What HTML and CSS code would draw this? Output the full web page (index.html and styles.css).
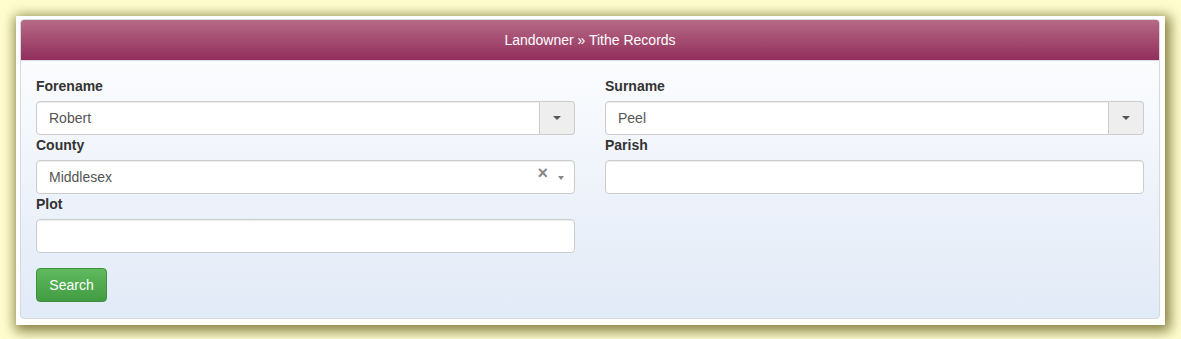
FILE: index.html
```html
<!DOCTYPE html>
<html>
<head>
<meta charset="utf-8">
<link rel="stylesheet" href="styles.css">
</head>
<body>
<div class="frame">
  <div class="panel">
    <div class="panel-heading">Landowner &raquo; Tithe Records</div>
    <div class="panel-body">
      <div class="grid">
        <div class="field">
          <label class="lbl">Forename</label>
          <div class="input-group">
            <div class="control">Robert</div>
            <div class="addon"><span class="caret"></span></div>
          </div>
        </div>
        <div class="field">
          <label class="lbl">Surname</label>
          <div class="input-group">
            <div class="control">Peel</div>
            <div class="addon"><span class="caret"></span></div>
          </div>
        </div>
        <div class="field">
          <label class="lbl">County</label>
          <div class="control combo">
            <span class="combo-text">Middlesex</span>
            <span class="clear">&times;</span>
            <span class="caret small"></span>
          </div>
        </div>
        <div class="field">
          <label class="lbl">Parish</label>
          <div class="control"></div>
        </div>
        <div class="field">
          <label class="lbl">Plot</label>
          <div class="control"></div>
        </div>
      </div>
      <button class="btn-search">Search</button>
    </div>
  </div>
</div>
</body>
</html>
```

FILE: styles.css
```css
html, body {
  margin: 0;
  padding: 0;
}
html {
  background: #fffdcf;
}
body {
  padding: 16px 16px 14px 16px;
  font-family: "Liberation Sans", Arial, sans-serif;
  font-size: 14px;
  line-height: 20px;
  color: #333;
}
.frame {
  background: #fff;
  padding: 3px 5px 6px 4px;
  box-shadow: 2px 3px 12px 3px rgba(85, 82, 15, 0.75);
}
.panel {
  border: 1px solid #d6d9e0;
  border-radius: 4px;
  overflow: hidden;
  background: linear-gradient(to bottom, #ffffff 0%, #e1eaf7 100%);
}
.panel-heading {
  height: 40px;
  line-height: 40px;
  text-align: center;
  color: #fff;
  font-size: 14px;
  background: linear-gradient(to bottom, #b66a85 0%, #922e5c 100%);
  border-bottom: 1px solid #d9dde6;
}
.panel-body {
  padding: 15px 15px 16px 15px;
}
.grid {
  display: grid;
  grid-template-columns: 1fr 1fr;
  column-gap: 30px;
}
.lbl {
  display: block;
  font-weight: bold;
  margin-bottom: 5px;
  color: #333;
}
.input-group {
  display: flex;
}
.control {
  flex: 1;
  height: 34px;
  box-sizing: border-box;
  padding: 6px 12px;
  border: 1px solid #ccc;
  border-radius: 4px;
  background: #fff;
  color: #555;
  box-shadow: inset 0 1px 1px rgba(0,0,0,0.075);
}
.input-group .control {
  border-radius: 4px 0 0 4px;
}
.addon {
  width: 35px;
  box-sizing: border-box;
  border: 1px solid #ccc;
  border-left: 0;
  border-radius: 0 4px 4px 0;
  background: #eee;
  display: flex;
  align-items: center;
  justify-content: center;
}
.caret {
  width: 0;
  height: 0;
  border-left: 4px solid transparent;
  border-right: 4px solid transparent;
  border-top: 4px solid #555;
}
.caret.small {
  border-left-width: 3px;
  border-right-width: 3px;
  border-top: 4px solid #888;
  margin-top: 2px;
}
.combo {
  display: flex;
  align-items: center;
  padding-right: 10px;
}
.combo-text {
  flex: 1;
}
.clear {
  color: #888;
  font-size: 18px;
  font-weight: bold;
  margin-right: 10px;
  margin-top: -8px;
  line-height: 18px;
}
.btn-search {
  margin-top: 15px;
  height: 34px;
  width: 71px;
  padding: 0;
  font-family: "Liberation Sans", Arial, sans-serif;
  font-size: 14px;
  color: #fff;
  background: linear-gradient(to bottom, #5fba5f 0%, #429c42 100%);
  border: 1px solid #3e8f3e;
  border-radius: 4px;
  display: block;
}
```
